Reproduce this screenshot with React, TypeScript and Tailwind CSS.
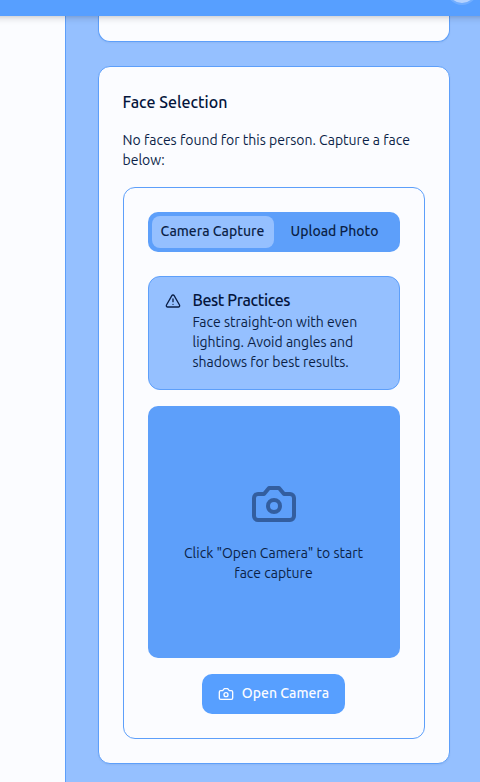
import React from "react";
import { TriangleAlert } from "lucide-react";

function CameraIcon({ className }: { className: string }) {
  return (
    <svg
      viewBox="0 0 24 24"
      fill="none"
      stroke="currentColor"
      strokeWidth={2}
      strokeLinecap="round"
      strokeLinejoin="round"
      className={className}
    >
      <path d="M14.5 4h-5L7 7H4a2 2 0 0 0-2 2v9a2 2 0 0 0 2 2h16a2 2 0 0 0 2-2V9a2 2 0 0 0-2-2h-3l-2.5-3z" />
      <circle cx="12" cy="13" r="3" />
    </svg>
  );
}

function Header() {
  return (
    <header className="relative z-10 -mx-4 flex h-4 shrink-0 items-start justify-end bg-[#579fff] pr-[18px] shadow-[0_4px_6px_-1px_rgba(0,0,0,0.12),0_2px_4px_-2px_rgba(0,0,0,0.12)]">
      <div className="-mt-[27.5px] size-8 rounded-full border-2 border-[#70adff] bg-[#b5d3ff]" />
    </header>
  );
}

function CaptureTabs() {
  return (
    <div className="grid h-10 grid-cols-2 rounded-[10px] bg-[#5d9ffa] p-1 text-sm font-medium text-[#0b1f47]">
      <button className="whitespace-nowrap rounded-[8px] bg-[#95c0ff] pb-[2px]">Camera Capture</button>
      <button className="whitespace-nowrap pb-[2px]">Upload Photo</button>
    </div>
  );
}

function BestPractices() {
  return (
    <div className="mt-6 flex h-[114px] gap-3 rounded-xl border border-[#5d9ffa] bg-[#95c0ff] px-4 pt-[11px] text-[#0b1f47]">
      <TriangleAlert className="mt-[5px] size-4 shrink-0" />
      <div>
        <h3 className="text-base font-medium leading-6 tracking-tight text-[#04153c]">Best Practices</h3>
        <p className="whitespace-nowrap text-sm leading-5">
          Face straight-on with even
          <br />
          lighting. Avoid angles and
          <br />
          shadows for best results.
        </p>
      </div>
    </div>
  );
}

export default function App() {
  return (
    <div className="flex h-[782px] w-[480px] flex-col overflow-hidden bg-[#fbfcff] font-['Ubuntu','Noto_Sans',sans-serif] text-[#0b1f47]">
      <Header />
      <div className="flex min-h-0 flex-1">
        <aside className="w-[66px] shrink-0 border-r border-[#5d9ffa] bg-[#fbfcff]" />
        <main className="flex flex-1 flex-col bg-[#95c0ff] pl-[31.5px] pr-[30.5px]">
          <section className="h-[26px] shrink-0 rounded-b-xl border border-t-0 border-[#5d9ffa] bg-[#fbfcff] shadow-xs" />
          <section className="mt-6 h-[698px] shrink-0 rounded-xl border border-[#5d9ffa] bg-[#fbfcff] px-6 pt-[23px] shadow-xs">
            <h2 className="text-base font-medium leading-6 text-[#04153c]">Face Selection</h2>
            <p className="mt-4 whitespace-nowrap text-sm leading-5">
              No faces found for this person. Capture a face
              <br />
              below:
            </p>
            <div className="mt-[17px] flex h-[552px] flex-col rounded-xl border border-[#5d9ffa] p-6">
              <CaptureTabs />
              <BestPractices />
              <div className="mt-4 flex h-[252px] shrink-0 flex-col items-center justify-center rounded-[10px] bg-[#5d9ffa]">
                <CameraIcon className="size-12 opacity-50" />
                <p className="mb-px mt-[15px] whitespace-nowrap text-center text-sm leading-5">
                  Click "Open Camera" to start
                  <br />
                  face capture
                </p>
              </div>
              <button className="mx-auto mt-4 flex h-10 shrink-0 items-center gap-2 rounded-[10px] bg-[#579fff] px-4 text-sm font-medium text-[#fbfcff]">
                <CameraIcon className="size-4 shrink-0" />
                <span className="whitespace-nowrap pb-[2px]">Open Camera</span>
              </button>
            </div>
          </section>
        </main>
      </div>
    </div>
  );
}
